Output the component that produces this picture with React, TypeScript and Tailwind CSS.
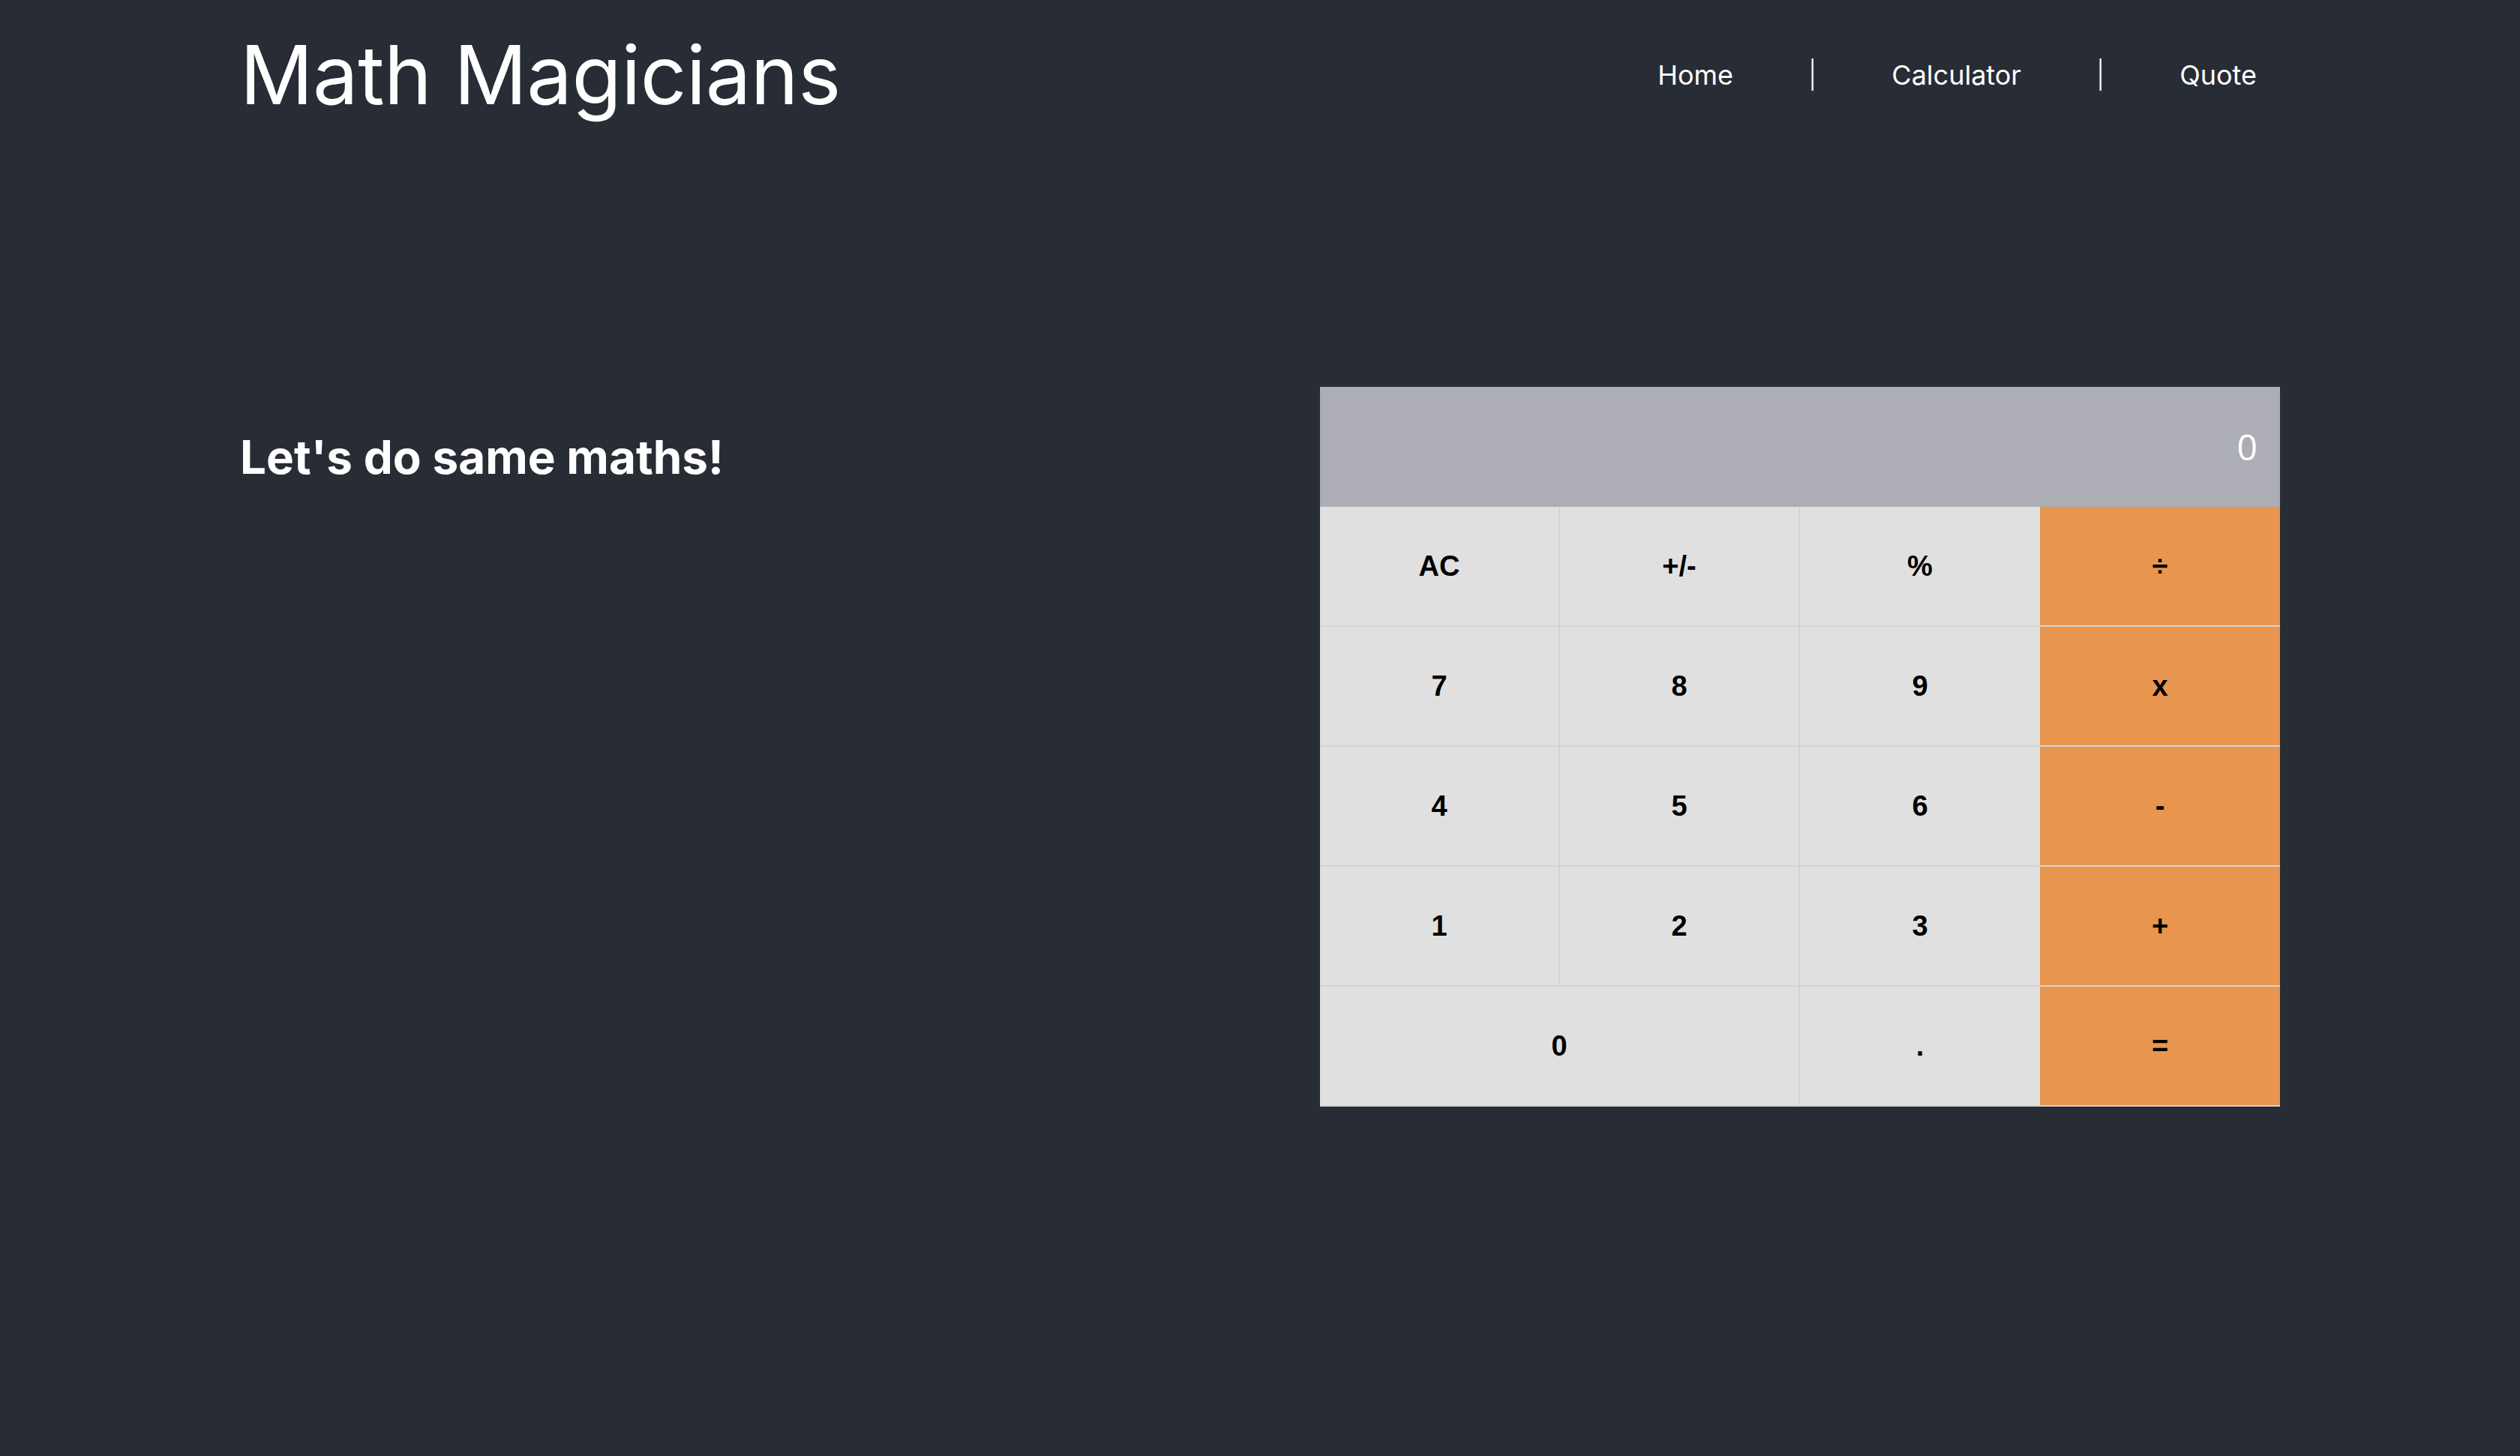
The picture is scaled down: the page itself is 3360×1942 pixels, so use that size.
import React from "react";

const keys = [
  { label: "AC", kind: "gray" },
  { label: "+/-", kind: "gray" },
  { label: "%", kind: "gray-last" },
  { label: "÷", kind: "op" },
  { label: "7", kind: "gray" },
  { label: "8", kind: "gray" },
  { label: "9", kind: "gray-last" },
  { label: "x", kind: "op" },
  { label: "4", kind: "gray" },
  { label: "5", kind: "gray" },
  { label: "6", kind: "gray-last" },
  { label: "-", kind: "op" },
  { label: "1", kind: "gray" },
  { label: "2", kind: "gray" },
  { label: "3", kind: "gray-last" },
  { label: "+", kind: "op" },
  { label: "0", kind: "zero" },
  { label: ".", kind: "gray-last" },
  { label: "=", kind: "op" },
];

function keyClass(kind: string) {
  const base =
    "flex h-[160px] items-center justify-center border-b-2 border-[#d4d4d4] font-['Liberation_Sans',Arial,sans-serif] text-[38px] font-bold text-black";
  if (kind === "op") return `${base} bg-[#e8954f]`;
  if (kind === "zero") return `${base} col-span-2 border-r-2 bg-[#e0e0e0]`;
  if (kind === "gray-last") return `${base} bg-[#e0e0e0]`;
  return `${base} border-r-2 bg-[#e0e0e0]`;
}

function Calculator() {
  return (
    <div className="w-[1280px]">
      <div className="flex h-[160px] items-center justify-end bg-[#adadb6] pr-[30px] font-['Open_Sans',sans-serif] text-[48px] font-normal text-white">
        0
      </div>
      <div className="grid grid-cols-4">
        {keys.map((k) => (
          <button key={k.label} type="button" className={keyClass(k.kind)}>
            {k.label}
          </button>
        ))}
      </div>
    </div>
  );
}

export default function App() {
  return (
    <div className="h-[1942px] w-full overflow-hidden bg-[#282c34] font-['Inter',sans-serif] text-white">
      <div className="mx-[320px]">
        <header className="flex h-[200px] items-center justify-between">
          <h1 className="text-[108px] leading-normal font-normal tracking-[-0.5px]">
            Math Magicians
          </h1>
          <nav className="flex items-center gap-[100px] pr-[31px] text-[36px]">
            <a href="#home">Home</a>
            <span className="font-light">|</span>
            <a href="#calculator">Calculator</a>
            <span className="font-light">|</span>
            <a href="#quote">Quote</a>
          </nav>
        </header>
        <main className="mt-[316px] flex items-start justify-between">
          <h2 className="mt-[47px] text-[62px] leading-normal font-bold">
            Let's do same maths!
          </h2>
          <Calculator />
        </main>
      </div>
    </div>
  );
}
